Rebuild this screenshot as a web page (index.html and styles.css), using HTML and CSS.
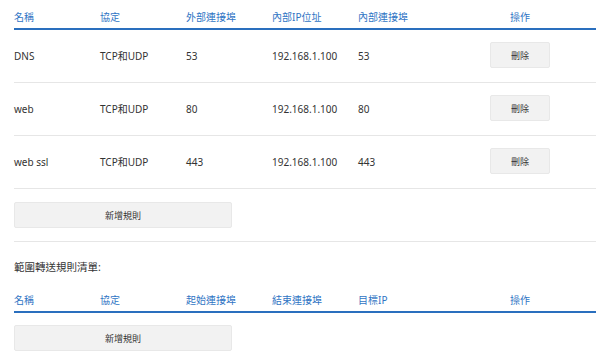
FILE: index.html
```html
<!DOCTYPE html>
<html lang="zh-Hant">
<head>
    <meta charset="UTF-8">
    <meta name="viewport" content="width=device-width, initial-scale=1.0">
    <title>連接埠轉送</title>
    <link rel="stylesheet" href="styles.css">
</head>
<body>
    <div id="container">
        <table class="rules">
            <thead>
                <tr>
                    <th>名稱</th>
                    <th>協定</th>
                    <th>外部連接埠</th>
                    <th>內部IP位址</th>
                    <th>內部連接埠</th>
                    <th class="op">操作</th>
                </tr>
            </thead>
            <tbody>
                <tr>
                    <td>DNS</td>
                    <td>TCP和UDP</td>
                    <td>53</td>
                    <td>192.168.1.100</td>
                    <td>53</td>
                    <td class="op"><button class="btn btn-del">刪除</button></td>
                </tr>
                <tr>
                    <td>web</td>
                    <td>TCP和UDP</td>
                    <td>80</td>
                    <td>192.168.1.100</td>
                    <td>80</td>
                    <td class="op"><button class="btn btn-del">刪除</button></td>
                </tr>
                <tr>
                    <td>web ssl</td>
                    <td>TCP和UDP</td>
                    <td>443</td>
                    <td>192.168.1.100</td>
                    <td>443</td>
                    <td class="op"><button class="btn btn-del">刪除</button></td>
                </tr>
            </tbody>
        </table>
        <button class="btn btn-add">新增規則</button>
        <hr class="divider">
        <h2 class="section-title">範圍轉送規則清單:</h2>
        <table class="rules range">
            <thead>
                <tr>
                    <th>名稱</th>
                    <th>協定</th>
                    <th>起始連接埠</th>
                    <th>結束連接埠</th>
                    <th>目標IP</th>
                    <th class="op">操作</th>
                </tr>
            </thead>
        </table>
        <button class="btn btn-add btn-add-range">新增規則</button>
    </div>
</body>
</html>
```
FILE: styles.css
```css
body {
    margin: 0;
    padding: 0;
    background: #fff;
    color: #333;
    font-family: "Noto Sans", "Noto Sans CJK TC", sans-serif;
    font-size: 10px;
}
#container {
    padding: 0 4px 0 14px;
}
.rules {
    width: 100%;
    border-collapse: collapse;
    table-layout: fixed;
}
.rules th {
    width: 86px;
    padding: 10px 0 4px;
    line-height: 14px;
    font-weight: normal;
    text-align: left;
    color: #2f74c4;
    border-bottom: 2px solid #2a6fbe;
}
.rules th.op {
    width: auto;
    text-align: center;
}
.rules td {
    height: 52px;
    padding: 0;
    line-height: 14px;
    vertical-align: middle;
    border-bottom: 1px solid #e6e6e6;
}
.rules td.op {
    text-align: center;
}
.btn {
    font-family: "Noto Sans", "Noto Sans CJK TC", sans-serif;
    font-size: 9px;
    color: #333;
    background-color: #f2f2f2;
    border: 1px solid #e8e8e8;
    border-radius: 2px;
    cursor: pointer;
    padding: 0;
}
.btn-del {
    width: 60px;
    height: 26px;
    margin-bottom: 2px;
}
.btn-add {
    display: block;
    width: 218px;
    height: 26px;
    margin-top: 13px;
}
.divider {
    border: 0;
    border-top: 1px solid #e6e6e6;
    margin: 13px 0 0;
}
.section-title {
    font-size: 10.5px;
    font-weight: normal;
    line-height: 14px;
    margin: 18px 0 0;
    color: #333;
}
.range {
    margin-top: 9px;
}
.btn-add-range {
    margin-top: 12px;
}
```
